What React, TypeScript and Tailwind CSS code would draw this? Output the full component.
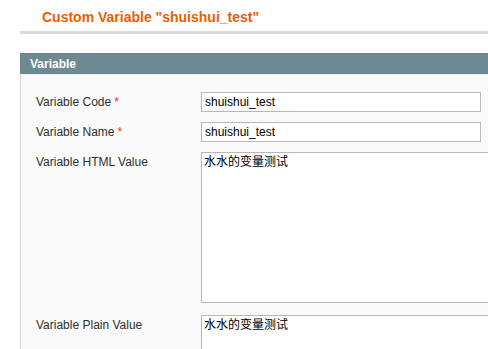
import { ReactNode } from "react";

const font = "font-['Liberation_Sans','Noto_Sans_CJK_SC',sans-serif]";

function Row({ label, required, children }: { label: string; required?: boolean; children: ReactNode }) {
    return (
        <div className="flex items-start">
            <div className="w-[165px] shrink-0 text-[12px] leading-[20px] text-[#2f2f2f]">
                {label}
                {required && <span className="ml-[3px] text-[#eb340a]">*</span>}
            </div>
            {children}
        </div>
    );
}

export default function App() {
    return (
        <div className={`w-[488px] h-[349px] overflow-hidden bg-white pl-[20px] ${font}`}>
            <h3 className="h-[31px] pl-[22px] pt-[9px] text-[14px] font-bold leading-[16px] text-[#eb5e00]">
                Custom Variable "shuishui_test"
            </h3>
            <div className="h-[3px] bg-[#dadada]" />

            <div className="mt-[19px]">
                <div className="h-[22px] bg-[#6f8992] pl-[10px] text-[12px] font-bold leading-[22px] text-white border-b border-[#e4ecee]">
                    Variable
                </div>
                <div className="flex flex-col gap-[10px] border-l border-[#d6d6d6] bg-[#fafafa] pl-[15px] pt-[17px] pb-[40px]">
                    <Row label="Variable Code" required>
                        <input
                            readOnly
                            defaultValue="shuishui_test"
                            className={`h-[20px] w-[280px] border border-[#b8b8b8] bg-white px-[3px] text-[12px] text-black outline-none ${font}`}
                        />
                    </Row>
                    <Row label="Variable Name" required>
                        <input
                            readOnly
                            defaultValue="shuishui_test"
                            className={`h-[20px] w-[280px] border border-[#b8b8b8] bg-white px-[3px] text-[12px] text-black outline-none ${font}`}
                        />
                    </Row>
                    <Row label="Variable HTML Value">
                        <textarea
                            readOnly
                            defaultValue="水水的变量测试"
                            className={`h-[151px] w-[320px] shrink-0 resize-none border border-[#b8b8b8] bg-white px-[2px] pt-[1px] text-[12px] leading-[16px] text-black outline-none ${font}`}
                        />
                    </Row>
                    <div className="mt-[2px]">
                        <Row label="Variable Plain Value">
                            <textarea
                                readOnly
                                defaultValue="水水的变量测试"
                                className={`h-[80px] w-[320px] shrink-0 resize-none border border-[#b8b8b8] bg-white px-[2px] pt-[1px] text-[12px] leading-[16px] text-black outline-none ${font}`}
                            />
                        </Row>
                    </div>
                </div>
            </div>
        </div>
    );
}
